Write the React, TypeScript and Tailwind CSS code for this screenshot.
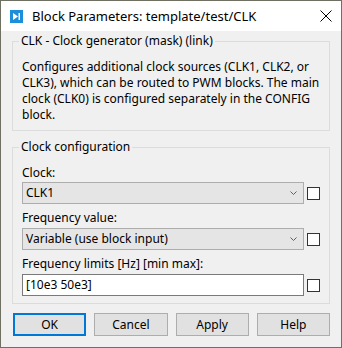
function Chevron() {
  return (
    <svg width="7" height="4" viewBox="0 0 7 4" className="shrink-0">
      <polyline points="0.5,0.5 3.5,3.5 6.5,0.5" fill="none" stroke="#606060" strokeWidth="1" />
    </svg>
  );
}

function Check() {
  return <div className="w-[13px] h-[13px] shrink-0 border border-[#333] bg-white" />;
}

function Dropdown({ value }: { value: string }) {
  return (
    <div className="flex items-center gap-[3px]">
      <div className="flex-1 h-[22px] flex items-center justify-between border border-[#adadad] bg-[#e5e5e5] pl-[3px] pr-[6px]">
        <span>{value}</span>
        <Chevron />
      </div>
      <Check />
    </div>
  );
}

export default function App() {
  return (
    <div className="w-[342px] h-[348px] border border-[#6f6f62] bg-[#f0f0f0] text-[12px] leading-4 text-black font-['Noto_Sans',sans-serif] flex flex-col">
      {/* title bar */}
      <div className="h-[30px] bg-white flex items-center pl-[9px] pr-[9px] shrink-0">
        <div className="w-[13px] h-[13px] bg-[#1b8fdc] flex items-center justify-center">
          <svg width="7" height="7" viewBox="0 0 7 7">
            <polygon points="0,0 5,3.5 0,7" fill="white" />
            <rect x="5.5" y="0" width="1.5" height="7" fill="white" />
          </svg>
        </div>
        <span className="ml-[9px] text-[13px]">Block Parameters: template/test/CLK</span>
        <svg width="12" height="12" viewBox="0 0 12 12" className="ml-auto">
          <path d="M0.5 0.5 L11.5 11.5 M11.5 0.5 L0.5 11.5" stroke="#000" strokeWidth="1" />
        </svg>
      </div>

      <div className="flex-1 pl-[11px] pr-[11px] pt-[2px]">
        <fieldset className="border border-[#dcdcdc] pl-[9px] pr-[9px] pt-[10px] pb-[7px]">
          <legend className="ml-[-3px] px-[2px]">CLK - Clock generator (mask) (link)</legend>
          <p>
            Configures additional clock sources (CLK1, CLK2, or CLK3), which can be routed to PWM blocks. The main
            clock (CLK0) is configured separately in the CONFIG block.
          </p>
        </fieldset>

        <fieldset className="mt-[8px] border border-[#dcdcdc] pl-[9px] pr-[9px] pt-[10px] pb-[7px]">
          <legend className="ml-[-3px] px-[2px]">Clock configuration</legend>
          <div>Clock:</div>
          <div className="mt-[1px]">
            <Dropdown value="CLK1" />
          </div>
          <div className="mt-[6px]">Frequency value:</div>
          <div className="mt-[2px]">
            <Dropdown value="Variable (use block input)" />
          </div>
          <div className="mt-[6px]">Frequency limits [Hz] [min max]:</div>
          <div className="mt-[2px] flex items-center gap-[3px]">
            <div className="flex-1 h-[22px] flex items-center border border-[#7a7a7a] bg-white pl-[3px]">
              [10e3 50e3]
            </div>
            <Check />
          </div>
        </fieldset>

        <div className="mt-[9px] pl-[1px] grid grid-cols-4 gap-[8px]">
          <button className="h-[23px] border-2 border-[#0078d7] bg-[#e1e1e1]">OK</button>
          <button className="h-[23px] border border-[#adadad] bg-[#e1e1e1]">Cancel</button>
          <button className="h-[23px] border border-[#adadad] bg-[#e1e1e1]">Apply</button>
          <button className="h-[23px] border border-[#adadad] bg-[#e1e1e1]">Help</button>
        </div>
      </div>
    </div>
  );
}
